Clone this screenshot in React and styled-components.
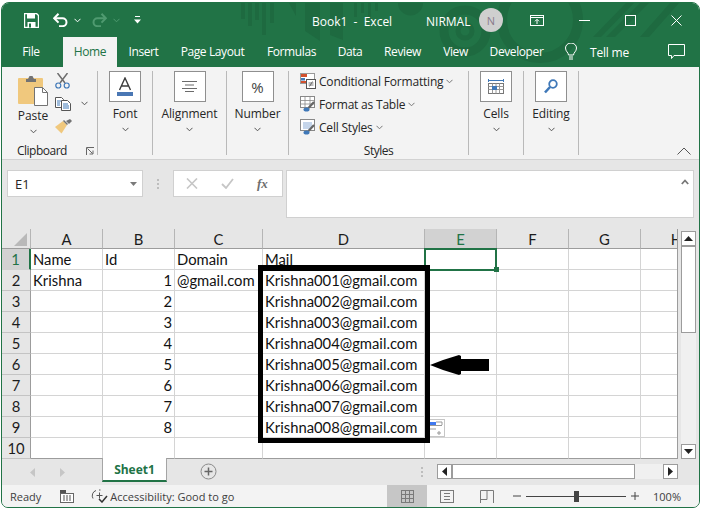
import React from "react";
import styled, { createGlobalStyle } from "styled-components";

const UI_FONT = '"Open Sans", "Noto Sans", sans-serif';
const GREEN = "#217346";

const Global = createGlobalStyle`
  html, body { margin: 0; padding: 0; background: #fff; }
  * { box-sizing: border-box; }
`;

const Win = styled.div`
  position: relative;
  margin: 2px 0 0 1px;
  width: 699px;
  height: 506px;
  border: 1px solid ${GREEN};
  border-radius: 8px 8px 7px 7px;
  overflow: hidden;
  display: flex;
  flex-direction: column;
  background: #e6e6e6;
  font-family: ${UI_FONT};
  font-size: 12px;
  color: #262626;
`;

const Header = styled.header`
  position: relative;
  background: ${GREEN};
  height: 64px;
  flex: none;
`;

const Pattern = styled.svg`
  position: absolute;
  left: -2px;
  top: -3px;
`;

const TitleBar = styled.div`
  position: relative;
  height: 34px;
  display: flex;
  align-items: center;
  color: #fff;
  padding-left: 22px;
`;

const Qat = styled.div`
  display: flex;
  align-items: center;
  width: 288px;
  flex: none;
`;

const QatSlot = styled.span`
  display: flex;
  width: ${(p) => p.$w}px;
`;

const BookName = styled.div`
  width: 114px;
  flex: none;
  font-size: 12px;
  padding-top: 2px;
  white-space: pre;
`;

const UserName = styled.div`
  width: 53px;
  flex: none;
  font-size: 12px;
  padding-top: 2px;
`;

const Avatar = styled.div`
  width: 24px;
  height: 24px;
  border-radius: 50%;
  background: #cfcfcf;
  color: #8a7a8c;
  font-size: 11px;
  display: flex;
  align-items: center;
  justify-content: center;
  flex: none;
  margin-right: 27px;
`;

const WinButtons = styled.div`
  display: flex;
  align-items: center;
  gap: 35px;
`;

const TabBar = styled.nav`
  position: relative;
  height: 30px;
  display: flex;
  align-items: stretch;
  padding-left: 7px;
`;

const Tab = styled.div`
  width: ${(p) => p.$w}px;
  margin-left: ${(p) => p.$ml || 0}px;
  display: flex;
  align-items: center;
  justify-content: center;
  padding-bottom: 1px;
  background: ${(p) => (p.$active ? "#f3f3f3" : "transparent")};
  color: ${(p) => (p.$active ? GREEN : "#fff")};
  font-size: 12px;
  letter-spacing: -0.4px;
  white-space: nowrap;
  flex: none;
`;

const TellMe = styled.div`
  display: flex;
  align-items: center;
  color: #fff;
  margin-left: 10px;
  gap: 13px;
  font-size: 12px;
  letter-spacing: -0.2px;
  width: 103px;
  flex: none;
`;

const CommentSvg = styled.svg`
  align-self: center;
  margin-top: -2px;
`;

const Ribbon = styled.section`
  height: 93px;
  flex: none;
  background: #f3f3f3;
  border-bottom: 1px solid #d2d2d2;
  padding-top: 4px;
  display: flex;
  align-items: flex-start;
  position: relative;
`;

const Group = styled.div`
  width: ${(p) => p.$w}px;
  height: 84px;
  flex: none;
  border-right: 1px solid #b9b9b9;
  display: flex;
  flex-direction: column;
  align-items: center;
  position: relative;
`;

const IconBox = styled.div`
  width: 32px;
  height: 31px;
  background: #fff;
  border: 1px solid #8f8f8f;
  display: flex;
  align-items: center;
  justify-content: center;
  flex: none;
`;

const GroupLabel = styled.div`
  font-size: 12px;
  line-height: 16px;
  margin-top: 4px;
  letter-spacing: -0.1px;
  white-space: nowrap;
`;

const Chev = styled.svg`
  display: block;
  flex: none;
`;

const ChevRow = styled.div`
  margin-top: 5px;
  height: 6px;
  display: flex;
`;

const ClipRow = styled.div`
  display: flex;
  height: 68px;
  width: 100%;
`;

const PasteCol = styled.div`
  width: 53px;
  padding: 4px 0 0 16px;
  flex: none;
  display: flex;
  flex-direction: column;
  align-items: flex-start;
`;

const PasteInner = styled.div`
  display: flex;
  flex-direction: column;
  align-items: center;
  width: 30px;
`;

const PasteText = styled.div`
  margin-top: 2px;
  line-height: 16px;
`;

const ClipTools = styled.div`
  display: flex;
  flex-direction: column;
  gap: 8px;
  padding-top: 2px;
`;

const ClipTool = styled.div`
  display: flex;
  align-items: center;
  gap: 10px;
  height: 15px;
`;

const GroupFoot = styled.div`
  position: absolute;
  left: 0;
  right: 0;
  bottom: -5px;
  height: 18px;
  line-height: 18px;
  text-align: ${(p) => p.$align || "center"};
  padding-left: ${(p) => p.$pl || 0}px;
  font-size: 12px;
  letter-spacing: -0.5px;
`;

const Launcher = styled.svg`
  position: absolute;
  left: 84px;
  top: 76px;
`;

const StyleList = styled.div`
  display: flex;
  flex-direction: column;
  align-self: flex-start;
  padding: 2px 0 0 11px;
  gap: 7px;
`;

const StyleItem = styled.div`
  display: flex;
  align-items: center;
  gap: 3px;
  height: 16px;
  letter-spacing: -0.2px;
  white-space: nowrap;
`;

const Collapse = styled.svg`
  position: absolute;
  left: 675px;
  top: 80px;
`;

const FormulaArea = styled.section`
  height: 69px;
  flex: none;
  padding: 10px 5px 0 5px;
  display: flex;
  align-items: flex-start;
`;

const NameBox = styled.div`
  width: 136px;
  height: 27px;
  background: #fff;
  border: 1px solid #d0d0d0;
  display: flex;
  align-items: center;
  justify-content: space-between;
  padding: 0 5px 0 7px;
  font-size: 13px;
  flex: none;
`;

const Dots = styled.div`
  width: 30px;
  height: 27px;
  flex: none;
  display: flex;
  flex-direction: column;
  align-items: center;
  justify-content: center;
  gap: 2px;
`;

const Dot = styled.i`
  width: 2px;
  height: 2px;
  background: #bdbdbd;
`;

const FxBox = styled.div`
  width: 110px;
  height: 27px;
  background: #fff;
  border: 1px solid #d0d0d0;
  display: flex;
  align-items: center;
  padding-left: 12px;
  gap: 23px;
  flex: none;
`;

const FxText = styled.span`
  font-family: "Liberation Serif", serif;
  font-style: italic;
  font-weight: bold;
  font-size: 13px;
  color: #6e6e6e;
`;

const FormulaInput = styled.div`
  margin-left: 3px;
  width: 408px;
  height: 48px;
  background: #fff;
  border: 1px solid #d0d0d0;
  display: flex;
  justify-content: flex-end;
  padding: 8px 4px 0 0;
`;

const SheetArea = styled.section`
  height: 230px;
  flex: none;
  display: flex;
  position: relative;
`;

const Grid = styled.div`
  width: 676px;
  flex: none;
  display: grid;
  grid-template-columns: 29px 72px 72px 88px 162px 72px 72px 72px 72px;
  grid-template-rows: 20px repeat(10, 21px);
  font-family: Lato, "Open Sans", sans-serif;
  font-size: 14.8px;
  color: #111;
  overflow: hidden;
  border-right: 1px solid #9c9c9c;
`;

const Corner = styled.div`
  background: #e6e6e6;
  border-right: 1px solid #b5b5b5;
  border-bottom: 1px solid #9c9c9c;
  position: relative;
`;

const CornerMark = styled.svg`
  position: absolute;
  right: 3px;
  bottom: 2px;
`;

const ColHead = styled.div`
  background: ${(p) => (p.$sel ? "#d2d2d2" : "#e6e6e6")};
  color: ${(p) => (p.$sel ? GREEN : "#1c1c1c")};
  border-right: 1px solid #b5b5b5;
  border-bottom: 1px solid #9c9c9c;
  display: flex;
  align-items: center;
  justify-content: center;
  overflow: hidden;
`;

const RowHead = styled.div`
  background: ${(p) => (p.$sel ? "#d2d2d2" : "#e6e6e6")};
  color: ${(p) => (p.$sel ? GREEN : "#1c1c1c")};
  border-bottom: 1px solid ${(p) => (p.$sel ? "#d2d2d2" : "#c4c4c4")};
  border-right: ${(p) => (p.$sel ? `2px solid ${GREEN}` : "1px solid #9c9c9c")};
  display: flex;
  align-items: center;
  justify-content: center;
`;

const Cell = styled.div`
  background: #fff;
  border-right: 1px solid #d4d4d4;
  border-bottom: 1px solid ${(p) => (p.$bottom ? "#9c9c9c" : "#d4d4d4")};
  padding: 0 2px 0 2px;
  display: flex;
  align-items: center;
  justify-content: ${(p) => (p.$num ? "flex-end" : "flex-start")};
  white-space: nowrap;
  overflow: visible;
`;

const SelectedCell = styled.div`
  position: absolute;
  left: 422px;
  top: 19px;
  width: 73px;
  height: 23px;
  border: 2px solid ${GREEN};
`;

const Handle = styled.i`
  position: absolute;
  right: -4px;
  bottom: -3px;
  width: 5px;
  height: 5px;
  background: ${GREEN};
  border: 0;
`;

const Highlight = styled.div`
  position: absolute;
  left: 256px;
  top: 36px;
  width: 172px;
  height: 178px;
  border: 5px solid #000;
  border-top-width: 6px;
`;

const Pointer = styled.svg`
  position: absolute;
  left: 427px;
  top: 126px;
`;

const PasteOptions = styled.div`
  position: absolute;
  left: 426px;
  top: 190px;
  width: 17px;
  height: 18px;
  background: #fff;
  border: 1px solid #c6c6c6;
`;

const VScroll = styled.div`
  margin-left: 3px;
  width: 15px;
  height: 228px;
  margin-top: 2px;
  display: flex;
  flex-direction: column;
  background: #f0f0f0;
  flex: none;
`;

const VBtn = styled.div`
  height: 15px;
  background: #fff;
  border: 1px solid #9c9c9c;
  display: flex;
  align-items: center;
  justify-content: center;
  flex: none;
`;

const VThumb = styled.div`
  height: 88px;
  margin-top: -1px;
  background: #fff;
  border: 1px solid #9c9c9c;
  border-top-width: 2px;
  flex: none;
`;

const VSpace = styled.div`
  flex: 1;
`;

const SheetTabs = styled.section`
  height: 26px;
  flex: none;
  display: flex;
  align-items: flex-start;
  position: relative;
`;

const NavArrows = styled.div`
  width: 100px;
  flex: none;
  height: 26px;
  display: flex;
  align-items: center;
  padding-left: 28px;
  gap: 25px;
`;

const SheetTab = styled.div`
  width: 65px;
  height: 24px;
  flex: none;
  margin-top: -1px;
  background: #fff;
  border: 1px solid #a5a5a5;
  border-top: 0;
  border-bottom: 2px solid ${GREEN};
  color: ${GREEN};
  font-weight: 700;
  font-size: 12px;
  display: flex;
  align-items: center;
  justify-content: center;
`;

const AddSheet = styled.svg`
  margin: 4px 0 0 33px;
  flex: none;
`;

const HScrollWrap = styled.div`
  margin: 5px 0 0 auto;
  display: flex;
  align-items: center;
  margin-right: 21px;
`;

const HSplit = styled.div`
  display: flex;
  flex-direction: column;
  gap: 2px;
  margin-right: 14px;
`;

const HScroll = styled.div`
  width: 241px;
  height: 15px;
  display: flex;
  background: #f0f0f0;
`;

const HBtn = styled.div`
  width: 15px;
  height: 15px;
  background: #fff;
  border: 1px solid #9c9c9c;
  display: flex;
  align-items: center;
  justify-content: center;
  flex: none;
`;

const HThumb = styled.div`
  width: 184px;
  background: #fff;
  border: 1px solid #9c9c9c;
  border-left-width: 2px;
  margin-left: -1px;
  flex: none;
`;

const HSpace = styled.div`
  flex: 1;
`;

const StatusBar = styled.footer`
  flex: 1;
  background: #f3f3f3;
  display: flex;
  align-items: center;
  padding-left: 8px;
  font-size: 11px;
  color: #404040;
`;

const StatusText = styled.span`
  white-space: nowrap;
`;

const StatusIcon = styled.span`
  display: flex;
  margin: ${(p) => p.$m};
`;

const ViewBtn = styled.div`
  width: 40px;
  height: 100%;
  display: flex;
  align-items: center;
  justify-content: center;
  background: ${(p) => (p.$on ? "#c6c6c6" : "transparent")};
  flex: none;
`;

const Spacer = styled.div`
  flex: 1;
`;

const ZoomMinus = styled.svg`
  margin-left: 6px;
  flex: none;
`;

const ZoomSlider = styled.div`
  position: relative;
  width: 100px;
  height: 1px;
  background: #444;
  margin: 0 5px;
`;

const ZoomThumb = styled.i`
  position: absolute;
  left: 48px;
  top: -5px;
  width: 5px;
  height: 11px;
  background: #444;
`;

const ZoomPct = styled.span`
  margin: 0 18px 0 14px;
  font-size: 11px;
`;

const PercentText = styled.span`
  font-size: 15px;
  color: #444;
`;

const Chevron = ({ color = "#555", size = 7 }) => (
  <Chev width={size} height="5" viewBox="0 0 7 5">
    <path d="M.5 .8 3.5 3.8 6.5 .8" fill="none" stroke={color} strokeWidth="1" />
  </Chev>
);

const SaveIcon = () => (
  <svg width="15" height="15" viewBox="0 0 15 15">
    <path d="M.5 .5h12l2 2v12H.5z" fill="none" stroke="#fff" strokeWidth="1.4" />
    <rect x="3" y="1" width="8" height="4.5" fill="#fff" />
    <rect x="3.5" y="9" width="8" height="5.5" fill="#fff" />
    <rect x="5" y="10.5" width="2" height="4" fill={GREEN} />
  </svg>
);

const UndoIcon = ({ color }) => (
  <svg width="15" height="14" viewBox="0 0 15 14">
    <path d="M1.5 5.2h8a4 4 0 0 1 0 8H6" fill="none" stroke={color} strokeWidth="2" />
    <path d="M5.5 .8 1.2 5.2l4.3 4.4" fill="none" stroke={color} strokeWidth="2" />
  </svg>
);

const RedoIcon = ({ color }) => (
  <svg width="15" height="14" viewBox="0 0 15 14">
    <path d="M13.5 5.2h-8a4 4 0 0 0 0 8H9" fill="none" stroke={color} strokeWidth="2" />
    <path d="M9.5 .8l4.3 4.4-4.3 4.4" fill="none" stroke={color} strokeWidth="2" />
  </svg>
);

const QatMore = () => (
  <svg width="7" height="8" viewBox="0 0 7 8">
    <rect x="1" y="0" width="5" height="1" fill="#fff" />
    <path d="M0 3.5h7L3.5 7.5z" fill="#fff" />
  </svg>
);

const DisplayIcon = () => (
  <svg width="14" height="11" viewBox="0 0 14 11">
    <rect x=".5" y=".5" width="13" height="10" fill="none" stroke="#fff" />
    <path d="M0 2.5h14" stroke="#fff" />
    <path d="M7 9V4.500M5 6.300 7 4.300l2 2" fill="none" stroke="#fff" />
  </svg>
);

const MinIcon = () => (
  <svg width="11" height="11" viewBox="0 0 11 11">
    <path d="M0 5.500h11" stroke="#fff" />
  </svg>
);

const MaxIcon = () => (
  <svg width="11" height="11" viewBox="0 0 11 11">
    <rect x=".5" y=".5" width="10" height="10" fill="none" stroke="#fff" />
  </svg>
);

const CloseIcon = () => (
  <svg width="11" height="11" viewBox="0 0 11 11">
    <path d="M.5 .5l10 10M10.500 .5l-10 10" stroke="#fff" />
  </svg>
);

const BulbIcon = () => (
  <svg width="12" height="18" viewBox="0 0 12 18">
    <path d="M3.500 12c0-2.500-3-3.500-3-7a5.500 5 0 0 1 11 0c0 3.500-3 4.500-3 7z" fill="none" stroke="#fff" />
    <path d="M4 14h4M4 16h4" stroke="#fff" />
  </svg>
);

const CommentIcon = () => (
  <CommentSvg width="17" height="15" viewBox="0 0 17 15">
    <path d="M.5 .5h16v11H6l-2.500 3v-3h-3z" fill="none" stroke="#fff" />
  </CommentSvg>
);

const PasteIcon = () => (
  <svg width="30" height="31" viewBox="0 0 30 31">
    <rect x="0" y="3" width="25" height="26" rx="1" fill="#f0c87d" />
    <path d="M8 4h2l1.500-3h3L16 4h2v3H8z" fill="#737373" />
    <path d="M16.500 12.500h8l5 5v13h-13z" fill="#fff" stroke="#737373" />
    <path d="M24.500 12.500v5h5" fill="none" stroke="#737373" />
  </svg>
);

const ScissorsIcon = () => (
  <svg width="15" height="16" viewBox="0 0 15 16">
    <path d="M2.500 0 10 10M12.500 0 5 10" stroke="#6d6d6d" strokeWidth="1.500" fill="none" />
    <circle cx="3.300" cy="12.500" r="2.500" fill="none" stroke="#3f78b8" strokeWidth="1.200" />
    <circle cx="11.700" cy="12.500" r="2.500" fill="none" stroke="#3f78b8" strokeWidth="1.200" />
  </svg>
);

const CopyIcon = () => (
  <svg width="16" height="14" viewBox="0 0 16 14">
    <path d="M.5 .5h6l2 2v8h-8z" fill="#fff" stroke="#555" />
    <path d="M6.500 3.500h6l3 3v7h-9z" fill="#fff" stroke="#555" />
    <path d="M2 4h4M2 6h3M2 8h3M8 7h5M8 9h6M8 11h6" stroke="#3f78b8" />
  </svg>
);

const BrushIcon = () => (
  <svg width="17" height="15" viewBox="0 0 17 15">
    <path d="M8 2 12 6 6.500 14.500 0 8z" fill="#f0c87d" />
    <path d="M8 2l4 4 1-1 -4-4z" fill="#737373" />
    <path d="M11 2 15 0l2 2-3 3z" fill="#737373" />
  </svg>
);

const FontIcon = () => (
  <svg width="18" height="19" viewBox="0 0 18 19">
    <path d="M3.500 13 9 1l5.500 12M5.500 9h7" fill="none" stroke="#3c3c3c" strokeWidth="1.400" />
    <rect x="1" y="15" width="16" height="4" fill="#4a77b4" />
  </svg>
);

const AlignIcon = () => (
  <svg width="15" height="11" viewBox="0 0 15 11">
    <path d="M0 .5h15M3 4h9M0 7.500h15M3 10.500h9" stroke="#6b6b6b" />
  </svg>
);

const CellsIcon = () => (
  <svg width="16" height="17" viewBox="0 0 16 17">
    <path d="M.5 1v3M15.500 1v3M1 2.500h14" stroke="#3f78b8" />
    <rect x=".5" y="5.500" width="15" height="10" fill="#fff" stroke="#777" />
    <path d="M.5 8.500h15M.5 11.500h15M4.500 5.500v10M8 5.500v10M11.500 5.500v10" stroke="#999" />
    <rect x="4" y="8" width="5" height="4" fill="#3f78b8" />
  </svg>
);

const SearchIcon = () => (
  <svg width="14" height="15" viewBox="0 0 14 15">
    <circle cx="9" cy="5" r="3.800" fill="none" stroke="#3f78b8" strokeWidth="1.800" />
    <path d="M6 8 1 13.500" stroke="#3f78b8" strokeWidth="2.600" />
  </svg>
);

const CondIcon = () => (
  <svg width="16" height="16" viewBox="0 0 16 16">
    <rect x=".5" y=".5" width="14" height="10" fill="#fff" stroke="#999" />
    <rect x="1" y="1" width="6" height="3" fill="#d2502d" />
    <rect x="1" y="5" width="4" height="2.500" fill="#3f78b8" />
    <rect x="1" y="8" width="5" height="2" fill="#d2502d" />
    <rect x="6.500" y="6.500" width="9" height="9" fill="#fff" stroke="#555" />
    <path d="M8.500 10h5M8.500 12h5M12.500 8.500l-3 5" stroke="#555" strokeWidth=".8" />
  </svg>
);

const TableIcon = () => (
  <svg width="16" height="16" viewBox="0 0 16 16">
    <rect x=".5" y=".5" width="14" height="11" fill="#fff" stroke="#888" />
    <path d="M.5 4.500h14M.5 8h14M5 .5v11M10 .5v11" stroke="#888" strokeWidth=".8" />
    <path d="M14 6 8.500 12" stroke="#666" strokeWidth="2.200" />
    <ellipse cx="6.500" cy="13.500" rx="3" ry="2" fill="#3f78b8" />
  </svg>
);

const FormatStyleIcon = () => (
  <svg width="16" height="16" viewBox="0 0 16 16">
    <rect x=".5" y=".5" width="14" height="11" fill="#fff" stroke="#888" />
    <rect x="3" y="3" width="9" height="7" fill="#c5d5ea" />
    <path d="M14 6 8.500 12" stroke="#666" strokeWidth="2.200" />
    <ellipse cx="6.500" cy="13.500" rx="3" ry="2" fill="#3f78b8" />
  </svg>
);

const Launch = () => (
  <Launcher width="8" height="8" viewBox="0 0 8 8">
    <path d="M.5 8V.5H8M1.500 1.500l5 5M7 3.500V7H3.500" fill="none" stroke="#666" />
  </Launcher>
);

const Arrow = ({ dir, color = "#222", w = 5, h = 9 }) => {
  const d = {
    up: "M0 5 4.500 0 9 5z",
    down: "M0 0 9 0 4.500 5z",
    left: "M5 0V9L0 4.500z",
    right: "M0 0V9L5 4.500z",
  }[dir];
  const vertical = dir === "up" || dir === "down";
  return (
    <svg width={vertical ? h : w} height={vertical ? w : h} viewBox={vertical ? "0 0 9 5" : "0 0 5 9"}>
      <path d={d} fill={color} />
    </svg>
  );
};

const tabs = [
  { label: "File", w: 44 },
  { label: "Home", w: 54, ml: 10, active: true },
  { label: "Insert", w: 53 },
  { label: "Page Layout", w: 85 },
  { label: "Formulas", w: 73 },
  { label: "Data", w: 44 },
  { label: "Review", w: 61 },
  { label: "View", w: 45 },
  { label: "Developer", w: 77 },
];

const simpleGroups = [
  { label: "Font", w: 55, icon: <FontIcon /> },
  { label: "Alignment", w: 74, icon: <AlignIcon /> },
  { label: "Number", w: 62, icon: <PercentText>%</PercentText> },
];

const columns = ["A", "B", "C", "D", "E", "F", "G", "H"];

const rows = Array.from({ length: 10 }, (_, i) => {
  const n = i + 1;
  const cells = ["", "", "", "", "", "", "", ""];
  if (n === 1) {
    cells[0] = "Name";
    cells[1] = "Id";
    cells[2] = "Domain";
    cells[3] = "Mail";
  }
  if (n === 2) {
    cells[0] = "Krishna";
    cells[2] = "@gmail.com";
  }
  if (n >= 2 && n <= 9) {
    cells[1] = n - 1;
    cells[3] = `Krishna00${n - 1}@gmail.com`;
  }
  return { n, cells };
});

export default function App() {
  return (
    <>
      <Global />
      <Win>
        <Header>
          <Pattern width="702" height="67" viewBox="0 0 702 67" fill="none">
            <g fill="#1e6a40">
              <rect x="241" y="3" width="4" height="16" />
              <rect x="248" y="3" width="4" height="23" />
              <rect x="255" y="3" width="4" height="17" />
              <rect x="262" y="3" width="4" height="32" />
              <rect x="270" y="3" width="4" height="20" />
              <path d="M289 3h7v13z" />
              <path d="M305 3h15v38l-15-10z" />
              <path d="M330 3h13v37l-13-5z" />
              <rect x="354" y="3" width="3" height="14" />
              <rect x="361" y="3" width="3" height="10" />
              <rect x="368" y="3" width="3" height="16" />
              <rect x="375" y="3" width="3" height="8" />
              <path d="M398 3a12.500 12.500 0 0 0 25 0z" />
              <path d="M593 37 626 3h8l-33 34zM606 37 640 3h9l-34 34zM640 37l30-34h9l-30 34z" />
            </g>
            <g stroke="#1e6a40" fill="none">
              <circle cx="465" cy="31" r="21" strokeWidth="9" />
              <circle cx="465" cy="31" r="7" strokeWidth="5" />
              <circle cx="540" cy="20" r="38" strokeWidth="10" />
            </g>
          </Pattern>
          <TitleBar>
            <Qat>
              <QatSlot $w={29}><SaveIcon /></QatSlot>
              <QatSlot $w={21}><UndoIcon color="#fff" /></QatSlot>
              <QatSlot $w={18}><Chevron color="#fff" /></QatSlot>
              <QatSlot $w={21}><RedoIcon color="#4f9a70" /></QatSlot>
              <QatSlot $w={21}><Chevron color="#4f9a70" /></QatSlot>
              <QatSlot $w={10}><QatMore /></QatSlot>
            </Qat>
            <BookName>Book1  -  Excel</BookName>
            <UserName>NIRMAL</UserName>
            <Avatar>N</Avatar>
            <WinButtons>
              <DisplayIcon />
              <MinIcon />
              <MaxIcon />
              <CloseIcon />
            </WinButtons>
          </TitleBar>
          <TabBar>
            {tabs.map((t) => (
              <Tab key={t.label} $w={t.w} $ml={t.ml} $active={t.active}>{t.label}</Tab>
            ))}
            <TellMe>
              <BulbIcon />
              <span>Tell me</span>
            </TellMe>
            <CommentIcon />
          </TabBar>
        </Header>

        <Ribbon>
          <Group $w={96}>
            <ClipRow>
              <PasteCol>
                <PasteInner>
                  <PasteIcon />
                  <PasteText>Paste</PasteText>
                  <ChevRow><Chevron /></ChevRow>
                </PasteInner>
              </PasteCol>
              <ClipTools>
                <ClipTool><ScissorsIcon /></ClipTool>
                <ClipTool><CopyIcon /><Chevron /></ClipTool>
                <ClipTool><BrushIcon /></ClipTool>
              </ClipTools>
            </ClipRow>
            <GroupFoot $align="left" $pl={15}>Clipboard</GroupFoot>
            <Launch />
          </Group>
          {simpleGroups.map((g) => (
            <Group key={g.label} $w={g.w}>
              <IconBox>{g.icon}</IconBox>
              <GroupLabel>{g.label}</GroupLabel>
              <ChevRow><Chevron /></ChevRow>
            </Group>
          ))}
          <Group $w={180}>
            <StyleList>
              <StyleItem><CondIcon /><span>Conditional Formatting</span><Chevron color="#777" /></StyleItem>
              <StyleItem><TableIcon /><span>Format as Table</span><Chevron color="#777" /></StyleItem>
              <StyleItem><FormatStyleIcon /><span>Cell Styles</span><Chevron color="#777" /></StyleItem>
            </StyleList>
            <GroupFoot>Styles</GroupFoot>
          </Group>
          <Group $w={55}>
            <IconBox><CellsIcon /></IconBox>
            <GroupLabel>Cells</GroupLabel>
            <ChevRow><Chevron /></ChevRow>
          </Group>
          <Group $w={55}>
            <IconBox><SearchIcon /></IconBox>
            <GroupLabel>Editing</GroupLabel>
            <ChevRow><Chevron /></ChevRow>
          </Group>
          <Collapse width="14" height="8" viewBox="0 0 14 8">
            <path d="M.5 7.500 7 1l6.500 6.500" fill="none" stroke="#555" />
          </Collapse>
        </Ribbon>

        <FormulaArea>
          <NameBox>
            <span>E1</span>
            <Arrow dir="down" color="#7a7a7a" w={4} h={7} />
          </NameBox>
          <Dots><Dot /><Dot /><Dot /></Dots>
          <FxBox>
            <svg width="12" height="11" viewBox="0 0 12 11">
              <path d="M1 .5l10 10M11 .5l-10 10" stroke="#c6c6c6" strokeWidth="1.600" />
            </svg>
            <svg width="13" height="11" viewBox="0 0 13 11">
              <path d="M1 6l4 4L12 1" fill="none" stroke="#c6c6c6" strokeWidth="1.800" />
            </svg>
            <FxText>fx</FxText>
          </FxBox>
          <FormulaInput>
            <svg width="8" height="6" viewBox="0 0 8 6">
              <path d="M.8 5 4 1.500 7.200 5" fill="none" stroke="#777" strokeWidth="1.800" />
            </svg>
          </FormulaInput>
        </FormulaArea>

        <SheetArea>
          <Grid>
            <Corner>
              <CornerMark width="13" height="13" viewBox="0 0 13 13">
                <path d="M13 0V13H0z" fill="#b9b9b9" />
              </CornerMark>
            </Corner>
            {columns.map((c) => (
              <ColHead key={c} $sel={c === "E"}>{c}</ColHead>
            ))}
            {rows.map((r) => (
              <React.Fragment key={r.n}>
                <RowHead $sel={r.n === 1}>{r.n}</RowHead>
                {r.cells.map((v, i) => (
                  <Cell key={i} $num={typeof v === "number"} $bottom={r.n === 10}>{v}</Cell>
                ))}
              </React.Fragment>
            ))}
          </Grid>
          <SelectedCell><Handle /></SelectedCell>
          <PasteOptions>
            <svg width="15" height="16" viewBox="0 0 15 16">
              <rect x="1" y="2" width="6" height="3" fill="#3f78f0" />
              <path d="M1 5.500h12M7 2h6v3M1 9h6M10 11v4M8 13h4" stroke="#999" fill="none" />
            </svg>
          </PasteOptions>
          <Highlight />
          <Pointer width="62" height="22" viewBox="0 0 62 22">
            <path d="M1 10 14 5 30 0l2 1v3h28v12H32v3l-2 1-16-5z" fill="#000" />
          </Pointer>
          <VScroll>
            <VBtn><Arrow dir="up" /></VBtn>
            <VThumb />
            <VSpace />
            <VBtn><Arrow dir="down" /></VBtn>
          </VScroll>
        </SheetArea>

        <SheetTabs>
          <NavArrows>
            <Arrow dir="left" color="#c6c6c6" />
            <Arrow dir="right" color="#c6c6c6" />
          </NavArrows>
          <SheetTab>Sheet1</SheetTab>
          <AddSheet width="17" height="17" viewBox="0 0 17 17">
            <circle cx="8.500" cy="8.500" r="7.500" fill="none" stroke="#8a8a8a" />
            <path d="M8.500 4.500v8M4.500 8.500h8" stroke="#666" strokeWidth="1.500" />
          </AddSheet>
          <HScrollWrap>
            <HSplit><Dot /><Dot /><Dot /></HSplit>
            <HScroll>
              <HBtn><Arrow dir="left" /></HBtn>
              <HThumb />
              <HSpace />
              <HBtn><Arrow dir="right" /></HBtn>
            </HScroll>
          </HScrollWrap>
        </SheetTabs>

        <StatusBar>
          <StatusText>Ready</StatusText>
          <StatusIcon $m="0 0 0 19px">
            <svg width="14" height="13" viewBox="0 0 14 13">
              <rect x="0" y="0" width="6" height="4" fill="#555" />
              <rect x=".5" y="3.500" width="13" height="9" fill="#fff" stroke="#666" />
              <path d="M3 6h9M3 8h9M3 10h9" stroke="#555" strokeDasharray="2 1" />
            </svg>
          </StatusIcon>
          <StatusIcon $m="0 2px 0 17px">
            <svg width="17" height="14" viewBox="0 0 17 14">
              <path d="M5 1.500a5.500 5.500 0 0 0-3 8M8 1h1.500M5.500 6.500h6M8.500 3.500v6" fill="none" stroke="#555" />
              <path d="M8 10l3 3 5-6" fill="none" stroke="#333" strokeWidth="1.500" />
            </svg>
          </StatusIcon>
          <StatusText>Accessibility: Good to go</StatusText>
          <Spacer />
          <ViewBtn $on>
            <svg width="13" height="13" viewBox="0 0 13 13">
              <rect x=".5" y=".5" width="12" height="12" fill="none" stroke="#7a7a7a" />
              <path d="M4.500 0v13M8.500 0v13M0 4.500h13M0 8.500h13" stroke="#7a7a7a" />
            </svg>
          </ViewBtn>
          <ViewBtn>
            <svg width="14" height="13" viewBox="0 0 14 13">
              <rect x=".5" y=".5" width="13" height="12" fill="none" stroke="#7a7a7a" />
              <path d="M4 3.500h6M4 6.500h6M4 9.500h6" stroke="#7a7a7a" />
            </svg>
          </ViewBtn>
          <ViewBtn>
            <svg width="14" height="13" viewBox="0 0 14 13">
              <path d="M.5 13V.5h13V13M.5 9.500h6.500V.5" fill="none" stroke="#7a7a7a" />
            </svg>
          </ViewBtn>
          <ZoomMinus width="8" height="8" viewBox="0 0 8 8">
            <path d="M0 4h8" stroke="#444" />
          </ZoomMinus>
          <ZoomSlider><ZoomThumb /></ZoomSlider>
          <svg width="8" height="8" viewBox="0 0 8 8">
            <path d="M0 4h8M4 0v8" stroke="#444" />
          </svg>
          <ZoomPct>100%</ZoomPct>
        </StatusBar>
      </Win>
    </>
  );
}
